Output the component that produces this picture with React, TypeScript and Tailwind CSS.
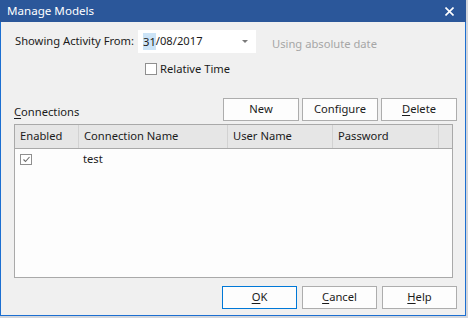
import React from "react";

const font = { fontFamily: '"Noto Sans", "Open Sans", sans-serif' };

const Btn = ({ children, primary = false, w = "w-[76px]" }: { children: React.ReactNode; primary?: boolean; w?: string }) => (
    <div
        className={`${w} h-[23px] flex items-center justify-center bg-[#fdfdfd] border text-[11.2px] text-[#1b1b1b] ${
            primary ? "border-[#0078d7]" : "border-[#adadad]"
        }`}
    >
        {children}
    </div>
);

const Check = ({ checked = false, size = "w-[12px] h-[12px]" }: { checked?: boolean; size?: string }) => (
    <div className={`${size} border border-[#8f8f8f] bg-white flex items-center justify-center`}>
        {checked && (
            <svg width="9" height="9" viewBox="0 0 9 9">
                <path d="M1.5 4.5 L3.5 6.5 L7.5 2" stroke="#6d6d6d" strokeWidth="1.1" fill="none" />
            </svg>
        )}
    </div>
);

const columns = [
    { name: "Enabled", w: "w-[64px]" },
    { name: "Connection Name", w: "w-[149px]" },
    { name: "User Name", w: "w-[105px]" },
    { name: "Password", w: "w-[106px]" },
];

export default function App() {
    return (
        <div className="w-[468px] h-[318px] bg-[#d3d6dc] overflow-hidden whitespace-nowrap" style={font}>
            <div className="w-[466px] h-[316px] flex flex-col">
                {/* title bar */}
                <div className="h-[22px] bg-[#2b579a] flex items-center justify-between pl-[7px] pr-[12px] text-white text-[11.6px]">
                    <span>Manage Models</span>
                    <svg width="9" height="9" viewBox="0 0 9 9">
                        <path d="M0.5 0.5 L8.5 8.5 M8.5 0.5 L0.5 8.5" stroke="white" strokeWidth="1.6" />
                    </svg>
                </div>

                <div className="flex-1 bg-[#f0f0f0] border-x border-b border-[#1c6fd1] pl-[13px] pr-[8px] flex flex-col text-[11.2px] text-[#1b1b1b]">
                    {/* activity row */}
                    <div className="mt-[8px] flex items-center h-[23px]">
                        <div className="w-[124px] pl-px">Showing Activity From:</div>
                        <div className="w-[118px] h-[23px] bg-white flex items-center pl-[5px] pr-[8px]">
                            <span className="bg-[#cce4f7] leading-[17px]">31</span>
                            <span>/08/2017</span>
                            <div className="flex-1" />
                            <svg width="6" height="4" viewBox="0 0 6 4">
                                <path d="M0 0 L6 0 L3 3 Z" fill="#7a7a7a" />
                            </svg>
                        </div>
                        <div className="ml-[16px] pt-[5px] text-[#a6a6a6]">Using absolute date</div>
                    </div>

                    {/* relative time */}
                    <div className="mt-[10px] pl-[131px] flex items-center gap-[3px] h-[12px]">
                        <Check />
                        <span>Relative Time</span>
                    </div>

                    {/* connections header */}
                    <div className="mt-[23px] flex items-end justify-between">
                        <div className="pb-[0px]">
                            <u className="underline-offset-2">C</u>onnections
                        </div>
                        <div className="flex gap-[3px]">
                            <Btn>New</Btn>
                            <Btn>Configure</Btn>
                            <Btn>
                                <span>
                                    <u className="underline-offset-2">D</u>elete
                                </span>
                            </Btn>
                        </div>
                    </div>

                    {/* table */}
                    <div className="mt-[3px] w-[439px] h-[154px] border border-[#a9a9a9] bg-[#fdfdfd] flex flex-col">
                        <div className="h-[24px] flex bg-[#e6e6e6] border-b border-[#a9a9a9]">
                            {columns.map((c) => (
                                <div key={c.name} className={`${c.w} flex items-center pl-[5px] border-r border-[#d2d2d2]`}>
                                    {c.name}
                                </div>
                            ))}
                        </div>
                        <div className="h-[20px] flex items-center">
                            <div className="w-[64px] pl-[5px]">
                                <Check checked size="w-[12px] h-[11px]" />
                            </div>
                            <div className="pl-[4px]">test</div>
                        </div>
                    </div>

                    {/* dialog buttons */}
                    <div className="mt-[8px] flex justify-end gap-[5px]">
                        <Btn primary w="w-[75px]">
                            <span>
                                <u className="underline-offset-2">O</u>K
                            </span>
                        </Btn>
                        <Btn w="w-[75px]">
                            <span>
                                <u className="underline-offset-2">C</u>ancel
                            </span>
                        </Btn>
                        <Btn w="w-[75px]">
                            <span>
                                <u className="underline-offset-2">H</u>elp
                            </span>
                        </Btn>
                    </div>
                </div>
            </div>
        </div>
    );
}
